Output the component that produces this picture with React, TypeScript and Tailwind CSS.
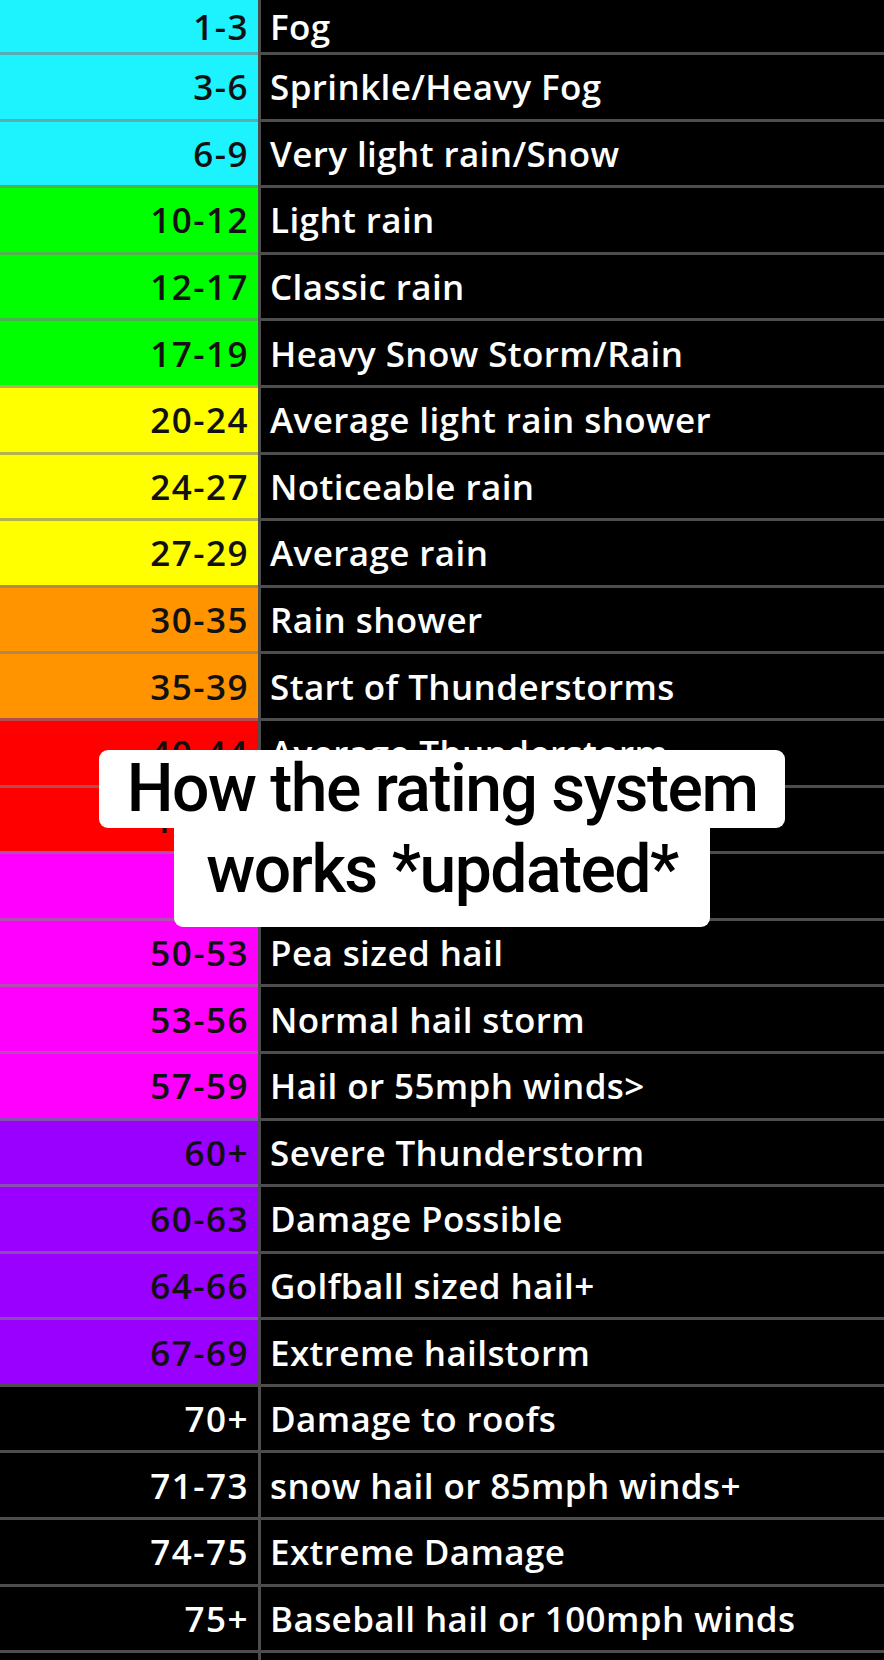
import clsx from "clsx"

type Row = {
  range: string
  label: string
  color: string
}

const ROWS: Row[] = [
  { range: "1-3", label: "Fog", color: "cyan" },
  { range: "3-6", label: "Sprinkle/Heavy Fog", color: "cyan" },
  { range: "6-9", label: "Very light rain/Snow", color: "cyan" },
  { range: "10-12", label: "Light rain", color: "green" },
  { range: "12-17", label: "Classic rain", color: "green" },
  { range: "17-19", label: "Heavy Snow Storm/Rain", color: "green" },
  { range: "20-24", label: "Average light rain shower", color: "yellow" },
  { range: "24-27", label: "Noticeable rain", color: "yellow" },
  { range: "27-29", label: "Average rain", color: "yellow" },
  { range: "30-35", label: "Rain shower", color: "orange" },
  { range: "35-39", label: "Start of Thunderstorms", color: "orange" },
  { range: "40-44", label: "Average Thunderstorm", color: "red" },
  { range: "45-49", label: "Strong Thunderstorm", color: "red" },
  { range: "49+", label: "Small hail", color: "magenta" },
  { range: "50-53", label: "Pea sized hail", color: "magenta" },
  { range: "53-56", label: "Normal hail storm", color: "magenta" },
  { range: "57-59", label: "Hail or 55mph winds>", color: "magenta" },
  { range: "60+", label: "Severe Thunderstorm", color: "purple" },
  { range: "60-63", label: "Damage Possible", color: "purple" },
  { range: "64-66", label: "Golfball sized hail+", color: "purple" },
  { range: "67-69", label: "Extreme hailstorm", color: "purple" },
  { range: "70+", label: "Damage to roofs", color: "black" },
  { range: "71-73", label: "snow hail or 85mph winds+", color: "black" },
  { range: "74-75", label: "Extreme Damage", color: "black" },
  { range: "75+", label: "Baseball hail or 100mph winds", color: "black" },
]

const CELL_BG: Record<string, string> = {
  cyan: "bg-[#1cf3ff] text-[#111]",
  green: "bg-[#00ff00] text-[#111]",
  yellow: "bg-[#ffff00] text-[#111]",
  orange: "bg-[#ff9300] text-[#111]",
  red: "bg-[#ff0000] text-[#111]",
  magenta: "bg-[#ff00ff] text-[#111]",
  purple: "bg-[#9900ff] text-[#111]",
  black: "bg-black text-white",
}

function RatingRow({ row, first }: { row: Row; first: boolean }) {
  return (
    <div className={clsx("flex", first ? "h-[52px]" : "h-[66.6px]")}>
      <div
        className={clsx(
          "w-[258px] shrink-0 flex items-center justify-end pr-[9px] tracking-[1.5px]",
          !first && "border-t-[3px] border-[#80808099]",
          CELL_BG[row.color]
        )}
      >
        {row.range}
      </div>
      <div
        className={clsx(
          "flex-1 flex items-center pl-[9px] bg-black text-white tracking-[0.4px] border-l-[3px] border-[#80808099]",
          !first && "border-t-[3px]"
        )}
      >
        {row.label}
      </div>
    </div>
  )
}

export default function App() {
  return (
    <div className="relative w-full min-h-screen bg-black overflow-hidden font-['Open_Sans',sans-serif] font-semibold text-[35px] leading-none">
      {ROWS.map((row, i) => (
        <RatingRow key={row.range + i} row={row} first={i === 0} />
      ))}
      <div className="flex h-[20px]">
        <div className="w-[258px] shrink-0 bg-black border-t-[3px] border-[#80808099]" />
        <div className="flex-1 bg-black border-t-[3px] border-l-[3px] border-[#80808099]" />
      </div>

      {/* caption overlay */}
      <div className="absolute left-0 right-0 top-[750px] flex flex-col items-center font-['Roboto',sans-serif] font-medium text-[66px] leading-[78px] tracking-[-1.5px] text-black">
        <div className="bg-white rounded-[9px] px-[28px] h-[78px]">How the rating system</div>
        <div className="bg-white rounded-b-[9px] px-[32px] pt-[3px] h-[99px]">works *updated*</div>
      </div>
    </div>
  )
}
